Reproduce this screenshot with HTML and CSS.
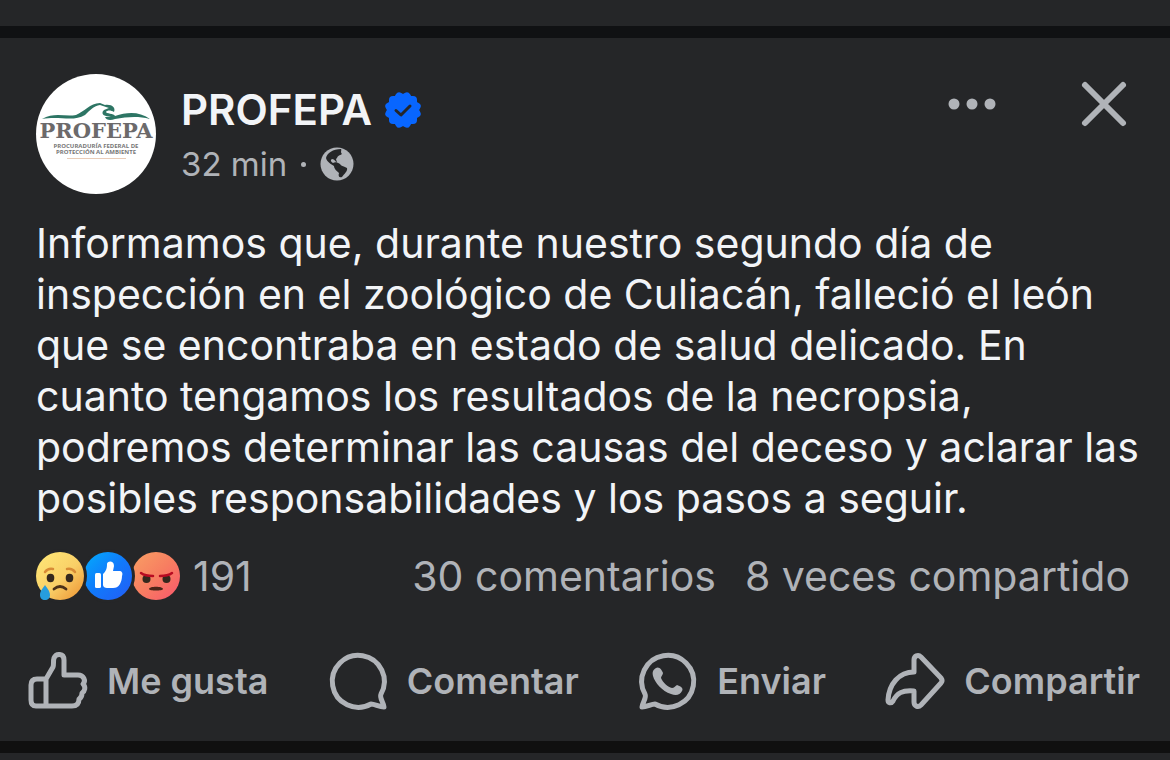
FILE: index.html
```html
<!DOCTYPE html>
<html lang="es">
<head>
  <meta charset="UTF-8" />
  <meta name="viewport" content="width=device-width, initial-scale=1.0" />
  <title>PROFEPA</title>
  <link rel="stylesheet" href="styles.css">
</head>
<body>
  <article class="post">
    <header class="post-header">
      <svg class="avatar" viewBox="0 0 120 120" role="img" aria-label="PROFEPA">
        <circle cx="60" cy="60" r="60" fill="#fff" />
        <path d="M6 45C18 38 29 43 40 41C48 38 54 29 64 29L69 31C76 30 80 34 78 38C75 36 71 36 70 38C70 40 78 39 79 42C91 38 103 37 114 45C102 42 91 43 79 45C74 47 70 46 69 43L75 43C69 42 65 41 67 37C69 35 71 35 73 34L64 31C58 32 54 36 49 41C38 48 24 42 6 45Z" fill="#2d7564" />
        <text class="logo-name" x="60" y="64" text-anchor="middle">PROFEPA</text>
        <text class="logo-small" x="60" y="74" text-anchor="middle">PROCURADURÍA FEDERAL DE</text>
        <text class="logo-small" x="60" y="80" text-anchor="middle">PROTECCIÓN AL AMBIENTE</text>
        <path d="M31 84.500H90" stroke="#e9cdb9" />
      </svg>
      <div class="author">
        <h1>
          PROFEPA
          <svg class="verified" viewBox="0 0 36 36" aria-label="Verificada">
            <g fill="#0866ff">
              <rect x="4" y="4" width="28" height="28" rx="4" />
              <rect x="4" y="4" width="28" height="28" rx="4" transform="rotate(30 18 18)" />
              <rect x="4" y="4" width="28" height="28" rx="4" transform="rotate(60 18 18)" />
            </g>
            <path d="M11 18.500L16 23L25 14" fill="none" stroke="#252628" stroke-width="3" stroke-linecap="round" stroke-linejoin="round" />
          </svg>
        </h1>
        <p class="meta">
          32 min
          <span class="dot"></span>
          <svg class="globe" viewBox="0 0 34 34" aria-label="Público">
            <circle cx="17" cy="17" r="16.500" fill="#b0b3b8" />
            <path d="M6 11C7 6 13 2 21 2C22 3 20 5 22 7C21 8 18 8 17 11C15 12 17 14 17 15C15 15 15 12 12 12C10 13 11 15 13 16C15 15 17 15 20 17C21 19 23 19 27 21C28 24 24 27 22 30C19 31 18 29 19 26C17 24 14 22 14 19C11 17 7 15 6 11Z" fill="#252628" />
          </svg>
        </p>
      </div>
      <div class="header-actions">
        <button type="button" aria-label="Más opciones">
          <svg width="48" height="48" viewBox="0 0 48 48" fill="currentColor">
            <circle cx="6" cy="24" r="5.500" /><circle cx="24" cy="24" r="5.500" /><circle cx="42" cy="24" r="5.500" />
          </svg>
        </button>
        <button type="button" aria-label="Cerrar">
          <svg width="48" height="48" viewBox="0 0 48 48" fill="none" stroke="currentColor" stroke-width="6" stroke-linecap="round">
            <path d="M5 5L43 43M43 5L5 43" />
          </svg>
        </button>
      </div>
    </header>

    <p class="post-text">Informamos que, durante nuestro segundo día de inspección en el zoológico de Culiacán, falleció el león que se encontraba en estado de salud delicado. En cuanto tengamos los resultados de la necropsia, podremos determinar las causas del deceso y aclarar las posibles responsabilidades y los pasos a seguir.</p>

    <div class="stats">
      <svg class="reactions" viewBox="0 0 146 50" aria-label="Reacciones">
        <defs>
          <linearGradient id="sad" x1="0" y1="0" x2="1" y2="1">
            <stop offset="0" stop-color="#ffe978" /><stop offset=".55" stop-color="#f9cf67" /><stop offset="1" stop-color="#ec9030" />
          </linearGradient>
          <linearGradient id="like" x1="0" y1="0" x2="1" y2="1">
            <stop offset="0" stop-color="#02adfc" /><stop offset=".5" stop-color="#1179fb" /><stop offset="1" stop-color="#245cf5" />
          </linearGradient>
          <linearGradient id="angry" x1="0" y1="0" x2="1" y2="1">
            <stop offset="0" stop-color="#f9a064" /><stop offset=".5" stop-color="#f77e61" /><stop offset="1" stop-color="#f9566c" />
          </linearGradient>
        </defs>
        <!-- angry -->
        <circle cx="120" cy="25" r="24" fill="url(#angry)" />
        <ellipse cx="110.500" cy="28" rx="4" ry="4" fill="#34281d" />
        <ellipse cx="130.500" cy="28" rx="4" ry="4" fill="#34281d" />
        <path d="M105 22Q109 25 117 25M136 22Q132 25 124 25" fill="none" stroke="#b80b22" stroke-width="2.500" stroke-linecap="round" />
        <path d="M113 38C113 35 127 35 127 38C127 40 113 40 113 38Z" fill="#4b2619" />
        <!-- like -->
        <circle cx="72" cy="25" r="27" fill="#252628" />
        <circle cx="72" cy="25" r="24" fill="url(#like)" />
        <rect x="59" y="22" width="6" height="15" rx="1.500" fill="#fff" />
        <path d="M67 23C70 20 71 18 71 13C71 10 78 9 78 15L77 20H83C86 20 87 22 86 25C86 28 85 31 84 33C82 36 80 37 77 37H71C69 37 67 36 67 34Z" fill="#fff" />
        <!-- sad -->
        <circle cx="24" cy="25" r="27" fill="#252628" />
        <circle cx="24" cy="25" r="24" fill="url(#sad)" />
        <path d="M9 21Q12 17 17 18M31 18Q36 17 39 21" fill="none" stroke="#d88b36" stroke-width="2.500" stroke-linecap="round" />
        <ellipse cx="14.500" cy="27" rx="3.800" ry="4.200" fill="#34281d" />
        <ellipse cx="33.500" cy="27" rx="3.800" ry="4.200" fill="#34281d" />
        <path d="M18 38Q24 33 30 38" fill="none" stroke="#4b3118" stroke-width="2.800" stroke-linecap="round" />
        <path d="M9 34C7 37 4 40 4 44C4 47 6 49 9 49C12 49 14 47 14 44C14 40 11 37 9 34Z" fill="#269ddd" />
      </svg>
      <span class="count">191</span>
      <a href="#" class="comments">30 comentarios</a>
      <a href="#">8 veces compartido</a>
    </div>

    <footer class="actions">
      <button type="button">
        <svg viewBox="0 0 58 58">
          <path d="M17 27L24 15C25 12 24 9 25 6C27 1 35 1 35 8V23H49C55 23 57 29 54 32C57 35 56 39 53 41C53 44 52 46 50 47C50 52 47 54 43 54H7C4 54 2 52 2 48V33C2 29 4 27 8 27H17V54" />
        </svg>
        Me gusta
      </button>
      <button type="button">
        <svg viewBox="0 0 58 58">
          <path d="M52 42A26 26 0 1 0 42 52C46 52 50 55 55 55C55 51 50 46 52 42Z" />
        </svg>
        Comentar
      </button>
      <button type="button">
        <svg viewBox="0 0 58 58">
          <path d="M6 42A26 26 0 1 1 16 52C12 52 8 55 3 55C3 51 8 46 6 42Z" />
          <path d="M17 16C20 14 23 18 24 21C24 23 22 24 22 26C24 31 29 35 33 36C35 36 36 34 38 33C41 34 45 36 43 39C41 43 37 44 32 42C23 39 16 31 14 24C13 20 14 18 17 16Z" fill="currentColor" stroke="none" />
        </svg>
        Enviar
      </button>
      <button type="button">
        <svg viewBox="0 0 58 58">
          <path d="M28 20V8C28 4 32 2 35 5L55 26Q57 29 55 31L35 53C32 56 28 54 28 50V39C16 38 11 41 7 49C5 52 2 51 2 48C3 32 13 20 28 20Z" />
        </svg>
        Compartir
      </button>
    </footer>
  </article>
</body>
</html>
```
FILE: styles.css
```css
* {
  box-sizing: border-box;
}
body {
  margin: 0;
  padding-top: 26px;
  background: #252628;
  color: #f2f4f7;
  font-family: Inter, "Liberation Sans", sans-serif;
}
h1, p {
  margin: 0;
}
button {
  padding: 0;
  border: none;
  background: none;
  color: #b0b3b8;
  font-family: inherit;
  cursor: pointer;
}
a {
  color: inherit;
  text-decoration: none;
}
svg {
  display: block;
  flex-shrink: 0;
  overflow: visible;
}
.post {
  border-top: 12px solid #101113;
  border-bottom: 12px solid #101010;
}
.post-header {
  display: flex;
  align-items: flex-start;
  padding: 36px 42px 0 36px;
}
.avatar {
  width: 120px;
  height: 120px;
}
.logo-name {
  font: bold 21px "DejaVu Serif", serif;
  fill: #6c6a6b;
}
.logo-small {
  font: bold 6px "Open Sans", sans-serif;
  fill: #777;
}
.author {
  flex: 1;
  padding: 10px 0 0 25px;
}
h1 {
  display: flex;
  align-items: center;
  gap: 13px;
  font-size: 42px;
  font-weight: 600;
  line-height: 52px;
}
.verified {
  width: 36px;
  height: 36px;
}
.meta {
  display: flex;
  align-items: center;
  gap: 14px;
  margin-top: 7px;
  color: #b0b3b8;
  font-size: 33px;
  line-height: 42px;
}
.dot {
  width: 5px;
  height: 5px;
  border-radius: 50%;
  background: #b0b3b8;
}
.globe {
  width: 34px;
  height: 34px;
}
.header-actions {
  display: flex;
  gap: 84px;
  padding-top: 6px;
}
.post-text {
  padding: 24px 28px 0 36px;
  font-size: 41px;
  line-height: 51px;
}
.stats {
  display: flex;
  align-items: center;
  gap: 29px;
  padding: 24px 40px 0 36px;
  color: #b0b3b8;
  font-size: 41px;
  line-height: 56px;
}
.reactions {
  width: 146px;
  height: 50px;
}
.count {
  margin-left: -18px;
}
.comments {
  margin-left: auto;
}
.actions {
  display: flex;
  justify-content: space-between;
  padding: 48px 30px 31px 29px;
}
.actions button {
  display: flex;
  align-items: center;
  gap: 20px;
  font-size: 36px;
  font-weight: 600;
  line-height: 58px;
}
.actions svg {
  width: 58px;
  height: 58px;
  fill: none;
  stroke: currentColor;
  stroke-width: 5px;
  stroke-linecap: round;
  stroke-linejoin: round;
}
```
